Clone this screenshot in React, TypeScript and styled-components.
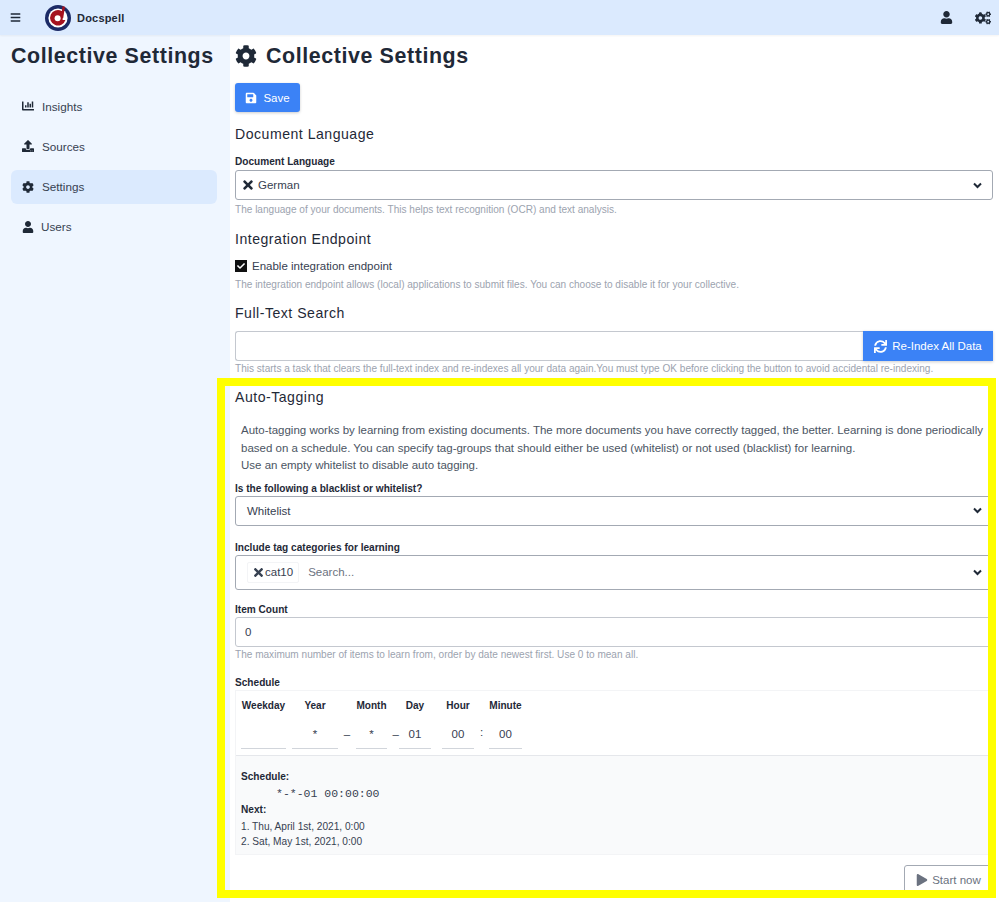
import React from "react";
import styled, { createGlobalStyle } from "styled-components";
import {
  FaBars,
  FaChartBar,
  FaCheck,
  FaCog,
  FaCogs,
  FaPlay,
  FaSave,
  FaSync,
  FaTimes,
  FaUpload,
  FaUser,
} from "react-icons/fa";

const GlobalStyle = createGlobalStyle`
  html, body { margin: 0; padding: 0; height: 100%; overflow: hidden; }
  body {
    font-family: "Liberation Sans", Arial, sans-serif;
    color: #1f2937;
    background: #fff;
  }
  * { box-sizing: border-box; }
`;

const Logo = () => (
  <svg width="28" height="28" viewBox="0 0 28 28">
    <circle cx="14" cy="14" r="13" fill="#1b2a66" />
    <circle cx="14" cy="14" r="9.6" fill="#fff" />
    <path d="M17.6 6.9 A7.8 7.8 0 1 0 21.4 16 L18.6 16 L19.4 6.9 Z" fill="#a5121f" />
    <circle cx="13.6" cy="14.2" r="3" fill="#fff" />
    <path d="M18.4 2.2 L21 2.8 L19.2 14 L17.2 14 Z" fill="#a5121f" />
  </svg>
);

const Chevron = () => (
  <svg width="9" height="7" viewBox="0 0 9 7">
    <path d="M1 1.5 L4.5 5 L8 1.5" fill="none" stroke="#1f2937" strokeWidth="2" />
  </svg>
);

const App = () => {
  return (
    <>
      <GlobalStyle />
      <Page>
        <TopBar>
          <BrandGroup>
            <BurgerIcon><FaBars /></BurgerIcon>
            <LogoSlot><Logo /></LogoSlot>
            <Brand>Docspell</Brand>
          </BrandGroup>
          <TopActions>
            <FaUser size={13} />
            <FaCogs size={16} />
          </TopActions>
        </TopBar>
        <Body>
          <Sidebar>
            <SideTitle>Collective Settings</SideTitle>
            <Menu>
              <MenuItem><MenuIcon><FaChartBar /></MenuIcon>Insights</MenuItem>
              <MenuItem><MenuIcon><FaUpload /></MenuIcon>Sources</MenuItem>
              <MenuItem $active><MenuIcon><FaCog /></MenuIcon>Settings</MenuItem>
              <MenuItem><MenuIcon $narrow><FaUser /></MenuIcon>Users</MenuItem>
            </Menu>
          </Sidebar>
          <Main>
            <PageTitle><FaCog size={22} />Collective Settings</PageTitle>
            <SaveButton><FaSave size={12} />Save</SaveButton>

            <SectionTitle $top={13}>Document Language</SectionTitle>
            <FieldLabel $top={12}>Document Language</FieldLabel>
            <SelectBox>
              <SelectedValue><FaTimes size={14} />German</SelectedValue>
              <Chevron />
            </SelectBox>
            <Help>The language of your documents. This helps text recognition (OCR) and text analysis.</Help>

            <SectionTitle $top={13}>Integration Endpoint</SectionTitle>
            <CheckRow>
              <CheckBox><FaCheck size={8} /></CheckBox>
              Enable integration endpoint
            </CheckRow>
            <Help $top={4}>The integration endpoint allows (local) applications to submit files. You can choose to disable it for your collective.</Help>

            <SectionTitle $top={12}>Full-Text Search</SectionTitle>
            <InputGroup>
              <TextBox $joined />
              <IndexButton><FaSync size={13} />Re-Index All Data</IndexButton>
            </InputGroup>
            <Help $top={1}>This starts a task that clears the full-text index and re-indexes all your data again.You must type OK before clicking the button to avoid accidental re-indexing.</Help>

            <SectionTitle $top={12}>Auto-Tagging</SectionTitle>
            <Intro>
              Auto-tagging works by learning from existing documents. The more documents you have correctly tagged, the better. Learning is done periodically based on a schedule. You can specify tag-groups that should either be used (whitelist) or not used (blacklist) for learning.
              <br />
              Use an empty whitelist to disable auto tagging.
            </Intro>

            <FieldLabel $top={7}>Is the following a blacklist or whitelist?</FieldLabel>
            <SelectBox $plain>
              <span>Whitelist</span>
              <Chevron />
            </SelectBox>

            <FieldLabel $top={15}>Include tag categories for learning</FieldLabel>
            <MultiSelect>
              <TagChip><FaTimes size={13} />cat10</TagChip>
              <Placeholder>Search...</Placeholder>
              <Chevron />
            </MultiSelect>

            <FieldLabel $top={13}>Item Count</FieldLabel>
            <TextBox>0</TextBox>
            <Help $top={1}>The maximum number of items to learn from, order by date newest first. Use 0 to mean all.</Help>

            <FieldLabel $top={14}>Schedule</FieldLabel>
            <ScheduleBox>
              <CronGrid>
                <CronHead>Weekday</CronHead>
                <CronSep />
                <CronHead>Year</CronHead>
                <CronSep />
                <CronHead>Month</CronHead>
                <CronSep />
                <CronHead>Day</CronHead>
                <CronSep />
                <CronHead>Hour</CronHead>
                <CronSep />
                <CronHead>Minute</CronHead>

                <CronField />
                <CronSep />
                <CronField>*</CronField>
                <CronSep>–</CronSep>
                <CronField>*</CronField>
                <CronSep $end>–</CronSep>
                <CronField>01</CronField>
                <CronSep />
                <CronField>00</CronField>
                <CronSep $raised>:</CronSep>
                <CronField>00</CronField>
              </CronGrid>
              <Preview>
                <PreviewLabel>Schedule:</PreviewLabel>
                <CronText>*-*-01 00:00:00</CronText>
                <PreviewLabel>Next:</PreviewLabel>
                <NextList>
                  <li>1. Thu, April 1st, 2021, 0:00</li>
                  <li>2. Sat, May 1st, 2021, 0:00</li>
                </NextList>
              </Preview>
            </ScheduleBox>
            <ActionRow>
              <StartButton><FaPlay size={12} />Start now</StartButton>
            </ActionRow>
          </Main>
        </Body>
        <Highlight />
      </Page>
    </>
  );
};

export default App;

const Page = styled.div`
  position: relative;
  width: 999px;
  height: 902px;
  overflow: hidden;
  display: flex;
  flex-direction: column;
`;

const TopBar = styled.header`
  flex: 0 0 35px;
  display: flex;
  align-items: center;
  justify-content: space-between;
  background: #dbeafe;
  box-shadow: 0 1px 2px rgba(0, 0, 0, 0.05);
  padding: 0 8px 0 10px;
  position: relative;
`;

const BrandGroup = styled.div`
  display: flex;
  align-items: center;
`;

const BurgerIcon = styled.span`
  display: inline-flex;
  font-size: 11px;
  color: #1f2937;
  width: 34px;
`;

const LogoSlot = styled.span`
  display: inline-flex;
  width: 33px;
`;

const Brand = styled.span`
  font-size: 11px;
  font-weight: 700;
  letter-spacing: 0.2px;
  color: #1f2937;
`;

const TopActions = styled.div`
  display: flex;
  align-items: center;
  gap: 22px;
  color: #1f2937;
`;

const Body = styled.div`
  flex: 1;
  display: flex;
  min-height: 0;
`;

const Sidebar = styled.aside`
  flex: 0 0 230px;
  width: 230px;
  min-width: 0;
  background: #eff6ff;
  padding: 9px 13px 9px 11px;
`;

const SideTitle = styled.h1`
  margin: 0;
  font-size: 21.4px;
  line-height: 24px;
  font-weight: 700;
  letter-spacing: 0.6px;
  color: #1f2937;
  white-space: nowrap;
`;

const Menu = styled.nav`
  margin-top: 21px;
  display: flex;
  flex-direction: column;
  gap: 6.3px;
`;

const MenuItem = styled.div<{ $active?: boolean }>`
  height: 34px;
  display: flex;
  align-items: center;
  padding-left: 11px;
  font-size: 11.7px;
  color: #374151;
  border-radius: 6px;
  background: ${(p) => (p.$active ? "#dbeafe" : "transparent")};
`;

const MenuIcon = styled.span<{ $narrow?: boolean }>`
  display: inline-flex;
  width: ${(p) => (p.$narrow ? "19px" : "20px")};
  font-size: 12px;
  color: #1f2937;
`;

const Main = styled.main`
  flex: 1;
  min-width: 0;
  padding: 9px 6px 0 5px;
`;

const PageTitle = styled.h1`
  margin: 0;
  display: flex;
  align-items: center;
  gap: 9px;
  font-size: 21.4px;
  line-height: 24px;
  font-weight: 700;
  letter-spacing: 0.6px;
  color: #1f2937;
`;

const SaveButton = styled.button`
  margin-top: 15px;
  width: 65px;
  height: 29px;
  display: flex;
  align-items: center;
  justify-content: center;
  gap: 6px;
  border: 0;
  border-radius: 3px;
  background: #3b82f6;
  color: #fff;
  font: 11.5px "Liberation Sans", Arial, sans-serif;
  box-shadow: 0 1px 3px rgba(0, 0, 0, 0.2);
`;

const SectionTitle = styled.h2<{ $top: number }>`
  margin: ${(p) => p.$top}px 0 0;
  font-size: 14.1px;
  line-height: 18px;
  font-weight: 400;
  letter-spacing: 0.5px;
  color: #1f2937;
`;

const FieldLabel = styled.label<{ $top: number }>`
  display: block;
  margin-top: ${(p) => p.$top}px;
  font-size: 10.1px;
  line-height: 13px;
  font-weight: 700;
  color: #1f2937;
`;

const SelectBox = styled.div<{ $plain?: boolean }>`
  margin-top: ${(p) => (p.$plain ? "1px" : "2px")};
  height: 30px;
  display: flex;
  align-items: center;
  justify-content: space-between;
  padding: 0 10px 0 ${(p) => (p.$plain ? "11px" : "5px")};
  border: 1px solid #a3a9b3;
  border-radius: 3px;
  font-size: 11.5px;
  color: #374151;
  background: #fff;
`;

const SelectedValue = styled.span`
  display: inline-flex;
  align-items: center;
  gap: 3px;
  svg { color: #1f2937; }
`;

const Help = styled.div<{ $top?: number }>`
  margin-top: ${(p) => p.$top ?? 3}px;
  font-size: 10.07px;
  line-height: 14px;
  color: #9ca3af;
  white-space: nowrap;
`;

const CheckRow = styled.div`
  margin-top: 10px;
  display: flex;
  align-items: center;
  gap: 5px;
  height: 16px;
  font-size: 11.5px;
  color: #374151;
`;

const CheckBox = styled.span`
  width: 12px;
  height: 12px;
  background: #111;
  color: #fff;
  display: inline-flex;
  align-items: center;
  justify-content: center;
`;

const InputGroup = styled.div`
  margin-top: 9px;
  display: flex;
`;

const TextBox = styled.div<{ $joined?: boolean }>`
  flex: 1;
  height: 30px;
  display: flex;
  align-items: center;
  padding: 0 9px;
  margin-top: ${(p) => (p.$joined ? "0" : "1px")};
  border: 1px solid #c4c8cf;
  border-right-width: ${(p) => (p.$joined ? "0" : "1px")};
  border-radius: ${(p) => (p.$joined ? "3px 0 0 3px" : "3px")};
  font-size: 11.5px;
  color: #374151;
`;

const IndexButton = styled.button`
  flex: 0 0 130px;
  height: 30px;
  display: flex;
  align-items: center;
  justify-content: center;
  gap: 5px;
  border: 0;
  background: #3b82f6;
  color: #fff;
  font: 11.5px "Liberation Sans", Arial, sans-serif;
  box-shadow: 0 1px 3px rgba(0, 0, 0, 0.2);
`;

const Intro = styled.p`
  margin: 16px 0 0;
  padding-left: 6px;
  font-size: 11.5px;
  line-height: 17.5px;
  color: #4b5563;
`;

const MultiSelect = styled.div`
  margin-top: 1px;
  height: 35px;
  display: flex;
  align-items: center;
  padding: 0 10px 0 11px;
  border: 1px solid #a3a9b3;
  border-radius: 3px;
`;

const TagChip = styled.span`
  height: 21px;
  display: inline-flex;
  align-items: center;
  padding: 0 5px 0 4px;
  border: 1px solid #f3f4f6;
  border-radius: 2px;
  font-size: 11.5px;
  color: #374151;
`;

const Placeholder = styled.span`
  flex: 1;
  margin-left: 9px;
  font-size: 11.5px;
  color: #6b7280;
`;

const ScheduleBox = styled.div`
  margin-top: 1px;
  border: 1px solid #f3f4f6;
`;

const CronGrid = styled.div`
  display: grid;
  grid-template-columns: 45px 6px 46px 18px 31px 12px 32px 11px 32px 15px 33px;
  grid-template-rows: 29px 29px;
  justify-content: start;
  padding: 0 0 6px 5px;
  border-bottom: 1px solid #e5e7eb;
`;

const CronHead = styled.div`
  align-self: center;
  justify-self: center;
  font-size: 10.05px;
  font-weight: 700;
  color: #1f2937;
  white-space: nowrap;
`;

const CronSep = styled.div<{ $raised?: boolean; $end?: boolean }>`
  text-align: ${(p) => (p.$end ? "right" : "center")};
  font-size: 11.5px;
  line-height: 29px;
  color: #374151;
  margin-top: ${(p) => (p.$raised ? "-2px" : "0")};
`;

const CronField = styled.div`
  height: 29px;
  text-align: center;
  font-size: 11.5px;
  line-height: 29px;
  color: #374151;
  border-bottom: 1px solid #d1d5db;
`;

const Preview = styled.div`
  background: #f9fafb;
  padding: 14px 5px 6px;
  height: 98px;
`;

const PreviewLabel = styled.div`
  font-size: 10.1px;
  line-height: 14px;
  font-weight: 700;
  color: #1f2937;
`;

const CronText = styled.pre`
  margin: 2px 0 1px;
  padding-left: 35px;
  font-family: "Liberation Mono", monospace;
  font-size: 11.5px;
  line-height: 16px;
  color: #374151;
`;

const NextList = styled.ul`
  list-style: none;
  margin: 2px 0 0;
  padding: 0;
  font-size: 10.15px;
  line-height: 15px;
  color: #374151;
`;

const ActionRow = styled.div`
  margin-top: 10px;
  display: flex;
  justify-content: flex-end;
`;

const StartButton = styled.button`
  width: 89px;
  height: 30px;
  display: flex;
  align-items: center;
  justify-content: center;
  gap: 4px;
  border: 1px solid #a3a9b3;
  border-radius: 3px;
  background: #fff;
  color: #6b7280;
  font: 11.5px "Liberation Sans", Arial, sans-serif;
`;

/* the yellow marker frame lies over the page */
const Highlight = styled.div`
  position: absolute;
  left: 217px;
  top: 378px;
  width: 779px;
  height: 520px;
  border: 8px solid #ffff00;
  pointer-events: none;
`;
